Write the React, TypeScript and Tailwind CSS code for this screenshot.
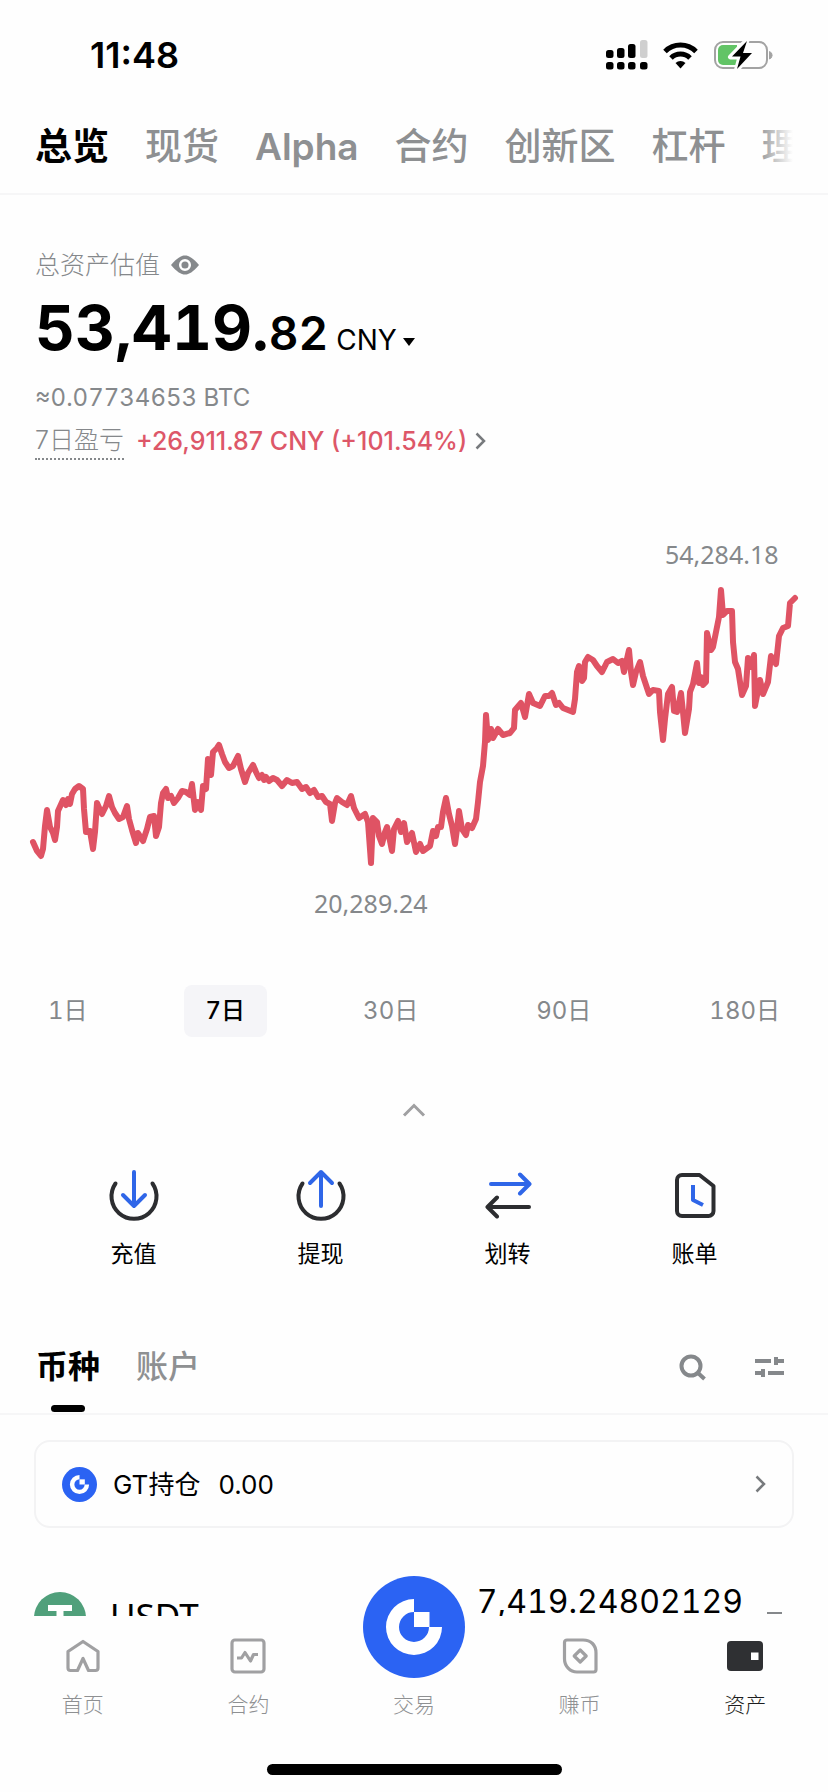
import { ReactNode } from "react";

const topTabs = ["总览", "现货", "Alpha", "合约", "创新区", "杠杆", "理财"];
const ranges = ["1日", "7日", "30日", "90日", "180日"];

const points =
    "33,843 37,852 41,857 43,850 45,827 47,811 50,828 53,834 55,841 57,828 58,812 63,801 66,806 68,800 70,805 72,795 75,790 79,787 83,790 84,810 86,833 90,832 93,850 " +
    "95,833 97,804 100,811 102,815 106,807 109,797 112,808 115,814 119,820 123,818 127,807 129,820 132,831 136,844 138,834 143,842 147,830 150,818 154,817 156,837 159,828 " +
    "161,804 163,794 166,790 168,799 171,797 174,804 178,799 182,792 186,793 190,796 192,785 195,811 198,803 201,811 203,787 206,790 208,760 211,776 213,753 217,749 219,746 222,755 " +
    "225,763 229,769 233,767 238,757 241,770 245,783 248,774 253,766 256,773 259,779 262,776 264,781 266,778 269,782 273,779 277,781 282,787 287,781 292,784 297,783 302,790 306,788 " +
    "310,794 314,791 318,798 322,797 326,803 330,805 332,822 335,804 337,799 342,803 347,806 351,797 354,809 359,819 365,815 368,823 371,864 373,819 377,823 379,837 382,845 385,833 " +
    "387,828 389,837 392,852 394,830 398,822 401,833 404,824 407,843 412,834 416,853 420,845 423,852 430,847 433,832 436,837 438,828 441,828 443,813 446,799 449,815 452,827 455,845 " +
    "457,830 459,812 462,830 466,836 468,826 472,829 476,820 478,803 480,783 483,767 485,743 486,716 488,741 491,730 493,739 498,730 503,736 510,734 514,729 515,711 521,704 525,718 " +
    "529,695 533,704 540,707 545,697 549,697 552,694 556,706 559,704 563,709 573,713 575,700 577,673 579,667 582,682 584,679 585,663 588,658 593,661 597,667 602,673 607,663 613,660 " +
    "618,664 622,662 624,673 629,651 631,673 633,686 636,673 640,663 643,677 647,689 649,695 653,691 659,692 660,713 663,741 665,720 668,695 672,688 674,712 677,713 681,694 683,713 " +
    "685,734 689,710 690,693 693,685 697,664 699,684 701,678 703,686 706,683 707,634 711,651 713,648 716,633 719,618 721,591 723,616 727,612 732,612 733,643 735,663 738,670 742,696 " +
    "746,687 748,659 751,668 754,656 755,707 760,681 763,695 768,683 771,657 776,665 779,637 783,629 788,627 790,604 795,599";

function GateMark({ className }: { className: string }) {
    return (
        <svg className={className} viewBox="-51 -51 102 102" aria-hidden="true">
            <circle r="51" fill="#2b63f3" />
            <path d="M0-28A28 28 0 1 0 28 0H15A15 15 0 1 1 0-15Z" fill="#fff" />
            <path d="M0-15H15.5V0H0Z" fill="#fff" />
        </svg>
    );
}

function StatusBar() {
    return (
        <div className="flex h-[100px] items-center justify-between pl-[90px] pr-[55px] pt-[10px]">
            <span className="text-[36px] font-semibold leading-none text-black proportional-nums">11:48</span>
            <svg className="h-[32px] w-[167px]" viewBox="0 0 167 32" aria-hidden="true">
                <g fill="#000">
                    <rect x="0" y="11" width="7.500" height="8" rx="2.5" />
                    <rect x="11" y="9" width="7.500" height="10" rx="2.5" />
                    <rect x="22" y="5" width="7.500" height="14" rx="2.5" />
                    <rect x="0" y="23" width="7.500" height="7.500" rx="2.5" />
                    <rect x="11" y="23" width="7.500" height="7.500" rx="2.5" />
                    <rect x="22" y="23" width="7.500" height="7.500" rx="2.5" />
                    <rect x="34" y="23" width="7.500" height="7.500" rx="2.5" />
                </g>
                <rect x="34" y="1" width="7.500" height="18" rx="2.5" fill="#cfcfcf" />
                <g fill="none" stroke="#000" strokeWidth="5">
                    <path d="M59 12.5A22 22 0 0 1 90 12.5" />
                    <path d="M65 19A13.500 13.500 0 0 1 84 19" />
                </g>
                <path d="M69.500 24A7.500 7.500 0 0 1 79.500 24L74.500 29.500Z" fill="#000" />
                <rect x="109" y="3" width="52" height="26" rx="8" fill="none" stroke="#a3a3a3" strokeWidth="2" />
                <path d="M117 6H131V26H117A5 5 0 0 1 112 21V11A5 5 0 0 1 117 6Z" fill="#62c466" />
                <path d="M163.500 12.500A4 4 0 0 1 163.500 20Z" fill="#a3a3a3" stroke="#a3a3a3" />
                <path d="M141 1L124.500 18H134L130.500 31L147 13.500H137.500Z" fill="#000" stroke="#fefefe" strokeWidth="5" strokeLinejoin="round" />
                <path d="M141 2L126 17.500H134.500L131 30L146 14H137Z" fill="#000" />
            </svg>
        </div>
    );
}

function TopTabs() {
    return (
        <div className="h-[95px] border-b-2 border-[#f6f6f7] px-[35px]">
            <nav className="relative flex h-full items-center gap-9 overflow-hidden whitespace-nowrap text-[37px] font-medium leading-none text-[#8e9092]">
                {topTabs.map((tab, i) => (
                    <button key={tab} className={i === 0 ? "shrink-0 font-bold text-black" : tab === "Alpha" ? "shrink-0 font-semibold" : "shrink-0"}>
                        {tab}
                    </button>
                ))}
                <span className="absolute right-0 h-full w-9 bg-linear-to-r from-transparent to-[#fefefe]" />
            </nav>
        </div>
    );
}

function Overview() {
    return (
        <section className="px-[35px] pt-[52px] text-[#85888b]">
            <div className="flex items-center gap-[11px]">
                <h1 className="text-[25px] font-light leading-9">总资产估值</h1>
                <button aria-label="隐藏资产">
                    <svg className="h-5 w-[28px]" viewBox="0 0 28 20">
                        <path d="M0 10C6 3 10 .5 14 .5S22 3 28 10C22 17 18 19.500 14 19.500S6 17 0 10Z" fill="#85888b" />
                        <circle cx="14" cy="10" r="4.800" fill="none" stroke="#fefefe" strokeWidth="2.500" />
                    </svg>
                </button>
            </div>
            <div className="mt-[9px] flex items-baseline text-black">
                <span className="text-[62px] font-bold leading-[72px]">53,419.</span>
                <span className="text-[46px] font-semibold leading-none">82</span>
                <button className="ml-2 flex items-center gap-1.5 text-[28px]">
                    CNY
                    <svg className="mt-1 h-2 w-3" viewBox="0 0 12 8" aria-hidden="true">
                        <path d="M0 0H12L6 8Z" />
                    </svg>
                </button>
            </div>
            <p className="mt-[16px] text-[24px] leading-9">≈0.07734653 BTC</p>
            <div className="mt-1.5 flex items-center text-[25px] leading-9">
                <span className="border-b-2 border-dotted border-[#85888b] font-light proportional-nums">7日盈亏</span>
                <a href="#pnl" className="ml-3 flex items-center gap-2 font-medium text-[#dd5768] proportional-nums">
                    +26,911.87 CNY (+101.54%)
                    <svg className="h-[18px] w-[11px]" viewBox="0 0 11 18" fill="none" stroke="#777a7d" strokeWidth="2.500" aria-hidden="true">
                        <path d="M1.500 1.500L9 9L1.500 16.500" />
                    </svg>
                </a>
            </div>
        </section>
    );
}

function Chart() {
    return (
        <svg className="mt-[65px] w-full" viewBox="0 526 828 400" role="img" aria-label="7日资产走势">
            <polyline points={points} fill="none" stroke="#df5364" strokeWidth="6" strokeLinejoin="round" strokeLinecap="round" />
            <g className="font-['Noto_Sans',sans-serif] text-[25px]" fill="#85888b">
                <text x="665" y="565">54,284.18</text>
                <text x="314" y="914">20,289.24</text>
            </g>
        </svg>
    );
}

function Ranges() {
    return (
        <div className="mt-[60px] flex justify-between px-[26px] text-[24px] text-[#85888b]">
            {ranges.map((range) => (
                <button
                    key={range}
                    className={range === "7日" ? "h-[52px] rounded-lg bg-[#f5f5f8] px-[22px] font-medium text-black" : "h-[52px] px-[22px]"}
                >
                    {range}
                </button>
            ))}
        </div>
    );
}

function Action({ label, children }: { label: string; children: ReactNode }) {
    return (
        <button className="flex flex-col items-center gap-[17px] text-[23px] leading-8 text-black">
            <svg className="h-[52px] w-[52px]" viewBox="0 0 52 52" fill="none" stroke="#2c2d30" strokeWidth="4" strokeLinecap="round" strokeLinejoin="round" aria-hidden="true">
                {children}
            </svg>
            {label}
        </button>
    );
}

function Actions() {
    return (
        <div className="mt-[52px] grid grid-cols-4 px-10">
            <Action label="充值">
                <path d="M7.500 14.500A22.500 22.500 0 1 0 44.500 14.500" />
                <path d="M26 3V37M15 26L26 37L37 26" stroke="#2f66e8" />
            </Action>
            <Action label="提现">
                <path d="M7.500 14.500A22.500 22.500 0 1 0 44.500 14.500" />
                <path d="M26 37V3M15 14L26 3L37 14" stroke="#2f66e8" />
            </Action>
            <Action label="划转">
                <path d="M9 15H47M38 5.500L47.500 15L38 24.500" stroke="#2f66e8" />
                <path d="M47 38H6M15 28.500L5.500 38L15 47.500" />
            </Action>
            <Action label="账单">
                <path d="M13 6H30.500L44.500 17V42A5 5 0 0 1 39.500 47H13A5 5 0 0 1 8 42V11A5 5 0 0 1 13 6Z" />
                <path d="M24 16V31L34 36" stroke="#2f66e8" strokeLinecap="butt" />
            </Action>
        </div>
    );
}

function HoldingsHeader() {
    return (
        <div className="mt-[57px] flex h-[88px] items-start justify-between border-b-2 border-[#f6f6f7] px-[36px] pt-[16px]">
            <div className="flex gap-9 text-[32px] font-medium leading-[48px] text-[#8e9092]">
                <button className="flex flex-col items-center gap-[14px] font-bold text-black">
                    币种
                    <span className="h-[7px] w-[34px] rounded-sm bg-black" />
                </button>
                <button className="self-start">账户</button>
            </div>
            <div className="flex h-12 items-center gap-[48px] pr-[7px]">
                <button aria-label="搜索">
                    <svg className="h-[28px] w-[28px]" viewBox="0 0 28 28" fill="none" stroke="#85888b" strokeWidth="4">
                        <circle cx="12" cy="13" r="9.500" />
                        <path d="M18.500 19.500L25.500 26" />
                    </svg>
                </button>
                <button aria-label="筛选">
                    <svg className="h-[22px] w-[30px]" viewBox="0 0 30 22" fill="#85888b">
                        <path d="M0 3H16V7H0ZM19 1H23V3H29V7H23V9H19ZM0 15H6V13H10V21H6V19H0ZM13 15H29V19H13Z" />
                    </svg>
                </button>
            </div>
        </div>
    );
}

function Holdings() {
    return (
        <div className="px-[34px] pt-[25px]">
            <a href="#gt" className="flex h-[88px] items-center rounded-2xl border-2 border-[#f3f3f4] px-[26px] text-[26px] text-black proportional-nums">
                <GateMark className="h-[35px] w-[35px]" />
                <span className="ml-4">GT持仓</span>
                <span className="ml-[18px]">0.00</span>
                <svg className="ml-auto h-[18px] w-[11px]" viewBox="0 0 11 18" fill="none" stroke="#777a7d" strokeWidth="2.500" aria-hidden="true">
                    <path d="M1.500 1.500L9 9L1.500 16.500" />
                </svg>
            </a>
            <div className="mt-[50px] flex items-start text-black">
                <svg className="mt-[14px] h-[52px] w-[52px]" viewBox="0 0 52 52" aria-hidden="true">
                    <circle cx="26" cy="26" r="26" fill="#50a07b" />
                    <path d="M14 13H38V19H29.500V40H22.500V19H14Z" fill="#fff" />
                </svg>
                <span className="ml-6 mt-[15px] font-['Noto_Sans',sans-serif] text-[35px] leading-[46px]">USDT</span>
                <span className="ml-auto text-[32px] leading-[48px]">7,419.24802129</span>
                <span className="ml-6 mr-3 mt-[34px] h-[2px] w-[15px] bg-[#85888b]" />
            </div>
        </div>
    );
}

function NavItem({ label, active, children }: { label: string; active?: boolean; children?: ReactNode }) {
    return (
        <a href="#nav" className={active ? "flex flex-col items-center gap-[15px] text-[#1d1e20]" : "flex flex-col items-center gap-[15px] text-[#8e9092]"}>
            <svg className="h-9 w-9" viewBox="0 0 36 36" fill="none" stroke="#a0a0a2" strokeWidth="3.200" strokeLinejoin="round" aria-hidden="true">
                {children}
            </svg>
            <span className="text-[21px] font-light leading-8">{label}</span>
        </a>
    );
}

function BottomNav() {
    return (
        <footer className="relative shrink-0 bg-[#fefefe] pb-[17px] pt-[22px]">
            <nav className="grid grid-cols-5">
                <NavItem label="首页">
                    <path d="M3 13.500L18 3.500L33 13.500V30A2.500 2.500 0 0 1 30.500 32.500H23.500L18 20.500L12.500 32.500H5.500A2.500 2.500 0 0 1 3 30Z" />
                </NavItem>
                <NavItem label="合约">
                    <rect x="2" y="2" width="32" height="32" rx="3" />
                    <path d="M7 20H11.500L15 14.500L20.500 23L23.500 16.500H28" />
                </NavItem>
                <NavItem label="交易" />
                <NavItem label="赚币">
                    <path d="M5 2H21C29 2 34 7 34 15V31.500A2.500 2.500 0 0 1 31.500 34H15C8 34 2.500 28 2.500 21V4.500A2.500 2.500 0 0 1 5 2Z" />
                    <path d="M18.200 12L24.200 18L18.200 24L12.200 18Z" />
                </NavItem>
                <NavItem label="资产" active>
                    <rect x="0" y="3" width="36" height="30" rx="4" fill="#2f3033" stroke="none" />
                    <rect x="24" y="14.500" width="7.500" height="7.500" fill="#fff" stroke="none" />
                </NavItem>
            </nav>
            <button aria-label="交易" className="absolute -top-10 left-1/2 -translate-x-1/2 rounded-full">
                <GateMark className="h-[102px] w-[102px]" />
            </button>
            <div className="mx-auto mt-[43px] h-[11px] w-[295px] rounded-full bg-black" />
        </footer>
    );
}

export default function App() {
    return (
        <div className="flex h-screen flex-col bg-[#fefefe] font-['Inter','Noto_Sans_CJK_SC',sans-serif] tabular-nums">
            <main className="min-h-0 flex-1 overflow-hidden">
                <StatusBar />
                <TopTabs />
                <Overview />
                <Chart />
                <Ranges />
                <button aria-label="收起" className="mx-auto mt-[66px] block">
                    <svg className="h-[14px] w-[24px]" viewBox="0 0 24 14" fill="none" stroke="#a0a0a2" strokeWidth="3">
                        <path d="M2 12.500L12 2.500L22 12.500" />
                    </svg>
                </button>
                <Actions />
                <HoldingsHeader />
                <Holdings />
            </main>
            <BottomNav />
        </div>
    );
}
